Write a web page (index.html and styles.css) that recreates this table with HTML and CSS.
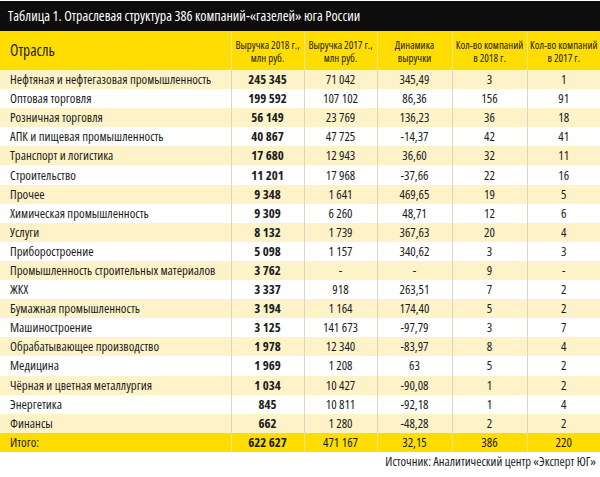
FILE: index.html
```html
<!DOCTYPE html>
<html lang="ru">
<head>
<meta charset="utf-8">
<link rel="stylesheet" href="styles.css">
</head>
<body>
<div class="page">
  <div class="title">Таблица 1. Отраслевая структура 386 компаний-«газелей» юга России</div>
  <table class="tbl">
    <colgroup>
      <col class="c-name"><col class="c-num"><col class="c-num"><col class="c-wide"><col class="c-wide"><col class="c-num">
    </colgroup>
    <thead>
      <tr>
        <th class="h-name">Отрасль</th>
        <th>Выручка 2018 г.,<br>млн руб.</th>
        <th>Выручка 2017 г.,<br>млн руб.</th>
        <th>Динамика<br>выручки</th>
        <th>Кол-во компаний<br>в 2018 г.</th>
        <th>Кол-во компаний<br>в 2017 г.</th>
      </tr>
    </thead>
    <tbody>
      <tr><td class="name">Нефтяная и нефтегазовая промышленность</td><td class="b">245 345</td><td>71 042</td><td>345,49</td><td>3</td><td>1</td></tr>
      <tr><td class="name">Оптовая торговля</td><td class="b">199 592</td><td>107 102</td><td>86,36</td><td>156</td><td>91</td></tr>
      <tr><td class="name">Розничная торговля</td><td class="b">56 149</td><td>23 769</td><td>136,23</td><td>36</td><td>18</td></tr>
      <tr><td class="name">АПК и пищевая промышленность</td><td class="b">40 867</td><td>47 725</td><td>-14,37</td><td>42</td><td>41</td></tr>
      <tr><td class="name">Транспорт и логистика</td><td class="b">17 680</td><td>12 943</td><td>36,60</td><td>32</td><td>11</td></tr>
      <tr><td class="name">Строительство</td><td class="b">11 201</td><td>17 968</td><td>-37,66</td><td>22</td><td>16</td></tr>
      <tr><td class="name">Прочее</td><td class="b">9 348</td><td>1 641</td><td>469,65</td><td>19</td><td>5</td></tr>
      <tr><td class="name">Химическая промышленность</td><td class="b">9 309</td><td>6 260</td><td>48,71</td><td>12</td><td>6</td></tr>
      <tr><td class="name">Услуги</td><td class="b">8 132</td><td>1 739</td><td>367,63</td><td>20</td><td>4</td></tr>
      <tr><td class="name">Приборостроение</td><td class="b">5 098</td><td>1 157</td><td>340,62</td><td>3</td><td>3</td></tr>
      <tr><td class="name">Промышленность строительных материалов</td><td class="b">3 762</td><td>-</td><td>-</td><td>9</td><td>-</td></tr>
      <tr><td class="name">ЖКХ</td><td class="b">3 337</td><td>918</td><td>263,51</td><td>7</td><td>2</td></tr>
      <tr><td class="name">Бумажная промышленность</td><td class="b">3 194</td><td>1 164</td><td>174,40</td><td>5</td><td>2</td></tr>
      <tr><td class="name">Машиностроение</td><td class="b">3 125</td><td>141 673</td><td>-97,79</td><td>3</td><td>7</td></tr>
      <tr><td class="name">Обрабатывающее производство</td><td class="b">1 978</td><td>12 340</td><td>-83,97</td><td>8</td><td>4</td></tr>
      <tr><td class="name">Медицина</td><td class="b">1 969</td><td>1 208</td><td>63</td><td>5</td><td>2</td></tr>
      <tr><td class="name">Чёрная и цветная металлургия</td><td class="b">1 034</td><td>10 427</td><td>-90,08</td><td>1</td><td>2</td></tr>
      <tr><td class="name">Энергетика</td><td class="b">845</td><td>10 811</td><td>-92,18</td><td>1</td><td>4</td></tr>
      <tr><td class="name">Финансы</td><td class="b">662</td><td>1 280</td><td>-48,28</td><td>2</td><td>2</td></tr>
      <tr class="total"><td class="name">Итого:</td><td class="b">622 627</td><td>471 167</td><td>32,15</td><td>386</td><td>220</td></tr>
    </tbody>
  </table>
  <div class="source">Источник: Аналитический центр «Эксперт ЮГ»</div>
</div>
</body>
</html>
```
FILE: styles.css
```css
html, body {
  margin: 0;
  padding: 0;
  background: #fff;
}
.page {
  width: 600px;
  padding-top: 1px;
  font-family: "Open Sans", "Roboto", sans-serif;
  font-stretch: 75%;
  color: #1c1c1c;
}
.title {
  background: #0d0d0d;
  color: #fff;
  height: 30px;
  line-height: 30px;
  padding-left: 8px;
  font-size: 14px;
}
.tbl {
  width: 600px;
  border-collapse: collapse;
  table-layout: fixed;
}
.c-name { width: 231px; }
.c-num { width: 73px; }
.c-wide { width: 75px; }
.tbl th {
  background: #ffdd00;
  height: 39px;
  padding: 0;
  font-size: 10.8px;
  font-weight: 500;
  line-height: 13px;
  text-align: center;
  border-left: 1px solid #f6e68a;
  color: #1c1c1c;
}
.tbl th.h-name {
  text-align: left;
  padding-left: 10px;
  font-size: 15.5px;
  border-left: none;
}
.tbl td {
  height: 19.1px;
  padding: 0;
  font-size: 12.8px;
  font-weight: 500;
  line-height: 19px;
  text-align: center;
  border-left: 1px solid #ddd6c0;
  white-space: nowrap;
}
.tbl td.name {
  text-align: left;
  padding-left: 10px;
  border-left: none;
}
.tbl td.b { font-weight: 700; }
.tbl tbody tr:nth-child(odd) td { background: #fdf2c8; }
.tbl tbody tr:nth-child(even) td { background: #fff; }
.tbl tbody tr.total td {
  background: #ffdd00;
  border-left-color: #f6e68a;
}
.source {
  text-align: right;
  padding-right: 4px;
  font-size: 12.6px;
  font-weight: 500;
  line-height: 20px;
  margin-top: 0;
}
```
